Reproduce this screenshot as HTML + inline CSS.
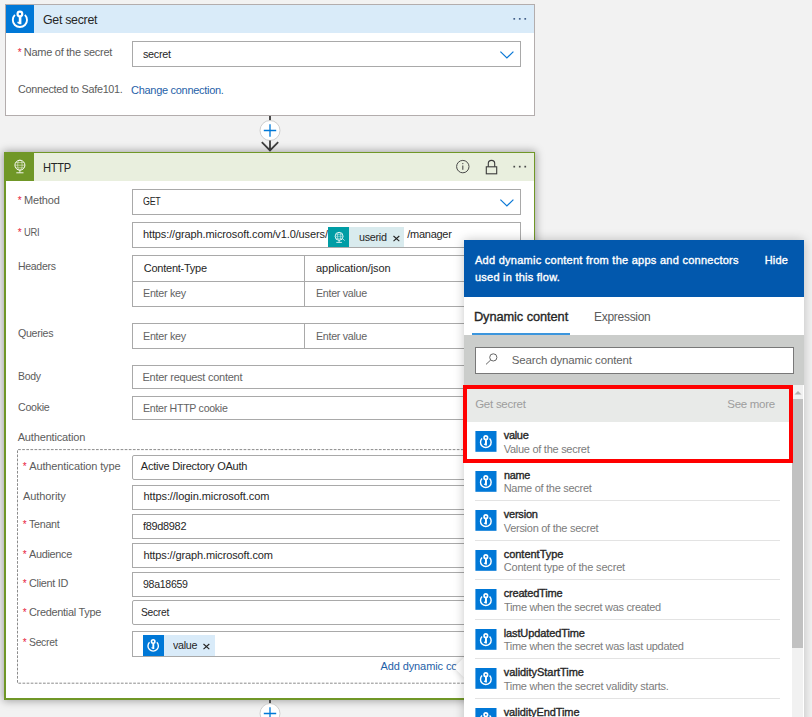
<!DOCTYPE html>
<html lang="en">
<head>
<meta charset="utf-8">
<title>HTTP action with Key Vault secret</title>
<style>
html,body{margin:0;padding:0}
body{width:812px;height:717px;overflow:hidden;position:relative;background:#f2f2f2;font-family:"Liberation Sans",sans-serif;font-size:11px;color:#5c5c5c}
.a{position:absolute}
.t{position:absolute;white-space:nowrap;line-height:16px;height:16px;transform-origin:0 50%}
.in{position:absolute;box-sizing:border-box;border:1px solid #a9a9a9;background:#fff}
.rq{position:absolute;color:#e8213c;font-size:10px;line-height:12px}
.ph{color:#636363}
.sb{-webkit-text-stroke:0.35px currentColor}
.dk{color:#262626}
.lk{color:#1f5fa8}
.sep{left:475.4px;width:305px;height:1px;background:#e3e3e3}
svg{position:absolute;overflow:visible}
</style>
</head>
<body>
<svg width="0" height="0" style="left:0;top:0"><defs>
<g id="kv"><g fill="none" stroke="#fff"><path d="M8.9 9.9A7.1 7.1 0 1 0 18.9 9.9" stroke-width="1.9"/><circle cx="13.9" cy="8.9" r="2.35" stroke-width="2.2"/></g><path d="M12.8 11.3h2.6v7.9h-1.8l-2.4-1.3.6-1.3 1 .4z" fill="#fff"/></g>
<g id="chev"><path d="M0.4 0.6L6.9 7L13.4 0.6" fill="none" stroke="#0a78d6" stroke-width="1.2"/></g>
</defs></svg>

<!-- ================= Get secret card ================= -->
<div class="a" id="card1" style="left:5px;top:4px;width:530px;height:112px;box-sizing:border-box;border:1px solid #b3adad;background:#fff"></div>
<div class="a" style="left:34px;top:5px;width:500px;height:28px;background:#d9ebf9"></div>
<div class="a" style="left:6px;top:5px;width:28px;height:28px;background:#0078d7"></div>
<svg style="left:6px;top:5px" width="28" height="28" viewBox="0 0 28 28"><use href="#kv"/></svg>
<div class="t dk" id="t_title1" style="left:43.0px;top:11.9px;font-size:12.5px;letter-spacing:-0.30px;transform:scaleX(0.990)">Get secret</div>
<svg style="left:513px;top:17.8px" width="14" height="2" viewBox="0 0 14 2"><g fill="#44608a"><rect x="0.4" y="0" width="1.7" height="1.7"/><rect x="5.9" y="0" width="1.7" height="1.7"/><rect x="11.4" y="0" width="1.7" height="1.7"/></g></svg>

<div class="rq" style="left:17.7px;top:46.8px">*</div>
<div class="t" id="t_name" style="left:23.7px;top:44.4px;letter-spacing:-0.25px">Name of the secret</div>
<div class="in" style="left:132px;top:41px;width:389px;height:26px"></div>
<div class="t dk" id="t_secret" style="left:142.9px;top:45.9px;letter-spacing:-0.30px;transform:scaleX(0.980)">secret</div>
<svg style="left:500px;top:51px" width="14" height="8" viewBox="0 0 14 8"><use href="#chev"/></svg>
<div class="t" id="t_conn" style="left:17.7px;top:80.9px;letter-spacing:-0.30px;transform:scaleX(0.984)">Connected to Safe101.</div>
<div class="t lk" id="t_chg" style="left:131.1px;top:81.9px;letter-spacing:-0.30px">Change connection.</div>

<!-- connector 1 -->
<div class="a" style="left:269px;top:116px;width:2px;height:5px;background:#4a4a4a"></div>
<svg style="left:259px;top:120px" width="22" height="32" viewBox="0 0 22 32"><circle cx="11" cy="10.5" r="10" fill="#fff" stroke="#cfcfcf" stroke-width="1"/><path d="M11 4.3V16.7M4.8 10.5H17.2" stroke="#0078d7" stroke-width="1.3" fill="none"/><path d="M11 20.5V30M2.8 22.2L11 30.4L19.2 22.2" stroke="#3f3f3f" stroke-width="1.8" fill="none"/></svg>

<!-- ================= HTTP card ================= -->
<div class="a" id="card2" style="left:4px;top:152px;width:531px;height:548px;box-sizing:border-box;background:#fff;border:solid #709727;border-width:1px 1px 2px 2px;box-shadow:0 0 8px 1px rgba(0,0,0,.34)"></div>
<div class="a" style="left:34px;top:153px;width:500px;height:28px;background:#e9efde"></div>
<div class="a" style="left:6px;top:153px;width:28px;height:28px;background:#709727"></div>
<svg style="left:6px;top:153px" width="28" height="28" viewBox="0 0 28 28"><g fill="none" stroke="#fff"><circle cx="13.9" cy="12.2" r="5" stroke-width="0.95"/><g stroke-width="0.6" opacity=".85"><ellipse cx="13.9" cy="12.2" rx="2.2" ry="5"/><path d="M9 12.2H18.8M9.9 9.6H17.9M9.9 14.8H17.9"/></g><path d="M13.9 17.2V19.5M10.3 19.8H17.5" stroke-width="0.9"/></g></svg>
<div class="t dk" id="t_title2" style="left:43.0px;top:159.9px;font-size:12.5px;letter-spacing:-0.30px;transform:scaleX(0.891)">HTTP</div>
<svg style="left:455px;top:158px" width="74" height="18" viewBox="0 0 74 18"><circle cx="7.8" cy="8.6" r="6.2" fill="none" stroke="#4a4a4a" stroke-width="1"/><path d="M7.8 7.4V11.8" stroke="#4a4a4a" stroke-width="1.1"/><circle cx="7.8" cy="5.6" r=".7" fill="#4a4a4a"/><rect x="31.3" y="8.8" width="10.4" height="7" fill="none" stroke="#3b3b3b" stroke-width="1.1"/><path d="M33.3 8.8V5.6a3.2 3.2 0 0 1 6.4 0V8.8" fill="none" stroke="#3b3b3b" stroke-width="1.1"/><g fill="#4a4a4a"><rect x="58.4" y="7.8" width="1.7" height="1.7"/><rect x="63.9" y="7.8" width="1.7" height="1.7"/><rect x="69.4" y="7.8" width="1.7" height="1.7"/></g></svg>

<!-- rows -->
<div class="rq" style="left:17.7px;top:194.8px">*</div>
<div class="t" id="l_method" style="left:23.9px;top:192.2px;letter-spacing:-0.12px">Method</div>
<div class="in" style="left:132px;top:189px;width:389px;height:26px"></div>
<div class="t dk" id="v_get" style="left:143.4px;top:192.9px;letter-spacing:-0.30px;transform:scaleX(0.805)">GET</div>
<svg style="left:500px;top:199px" width="14" height="8" viewBox="0 0 14 8"><use href="#chev"/></svg>

<div class="rq" style="left:17.7px;top:226.8px">*</div>
<div class="t" id="l_uri" style="left:23.9px;top:224.2px;letter-spacing:-0.30px;transform:scaleX(0.853)">URI</div>
<div class="in" style="left:132px;top:222px;width:389px;height:26px"></div>
<div class="t dk" id="v_uri" style="left:143.0px;top:226.0px;letter-spacing:-0.12px">https://graph.microsoft.com/v1.0/users/</div>
<div class="a" style="left:328px;top:227px;width:76px;height:20px;background:#d9ebee"></div>
<div class="a" style="left:328px;top:227px;width:21px;height:20px;background:#009da5"></div>
<svg style="left:328px;top:227px" width="21" height="20" viewBox="0 0 21 20"><g fill="none" stroke="#fff"><circle cx="11.1" cy="9.3" r="4" stroke-width="0.85"/><g stroke-width="0.55" opacity=".85"><ellipse cx="11.1" cy="9.3" rx="1.7" ry="4"/><path d="M7.1 9.3H15.1M7.9 7.3H14.3M7.9 11.3H14.3"/></g><path d="M11.1 13.3V15.2M8.3 15.4H13.9M15.2 12.2l1.3 1.3" stroke-width="0.8"/></g></svg>
<div class="t dk" id="v_userid" style="left:358.8px;top:228.8px;letter-spacing:-0.30px;transform:scaleX(0.980)">userid</div>
<svg style="left:392.5px;top:235.4px" width="7" height="7" viewBox="0 0 7 7"><path d="M0.5 1L6.3 6.2M6.3 1L0.5 6.2" stroke="#222" stroke-width="1.1" fill="none"/></svg>
<div class="t dk" id="v_manager" style="left:407.3px;top:226.0px;letter-spacing:-0.27px">/manager</div>

<div class="t" id="l_headers" style="left:17.7px;top:257.7px;letter-spacing:-0.30px;transform:scaleX(0.952)">Headers</div>
<div class="in" style="left:132px;top:255px;width:389px;height:52px"></div>
<div class="a" style="left:133px;top:281px;width:387px;height:1px;background:#a9a9a9"></div>
<div class="a" style="left:304px;top:256px;width:1px;height:50px;background:#a9a9a9"></div>
<div class="t dk" id="v_ct" style="left:143.8px;top:259.9px;letter-spacing:-0.25px">Content-Type</div>
<div class="t dk" id="v_aj" style="left:316.1px;top:259.8px;letter-spacing:-0.09px">application/json</div>
<div class="t ph" id="v_ek1" style="left:143.4px;top:284.7px;letter-spacing:-0.30px;transform:scaleX(0.978)">Enter key</div>
<div class="t ph" id="v_ev1" style="left:315.7px;top:284.7px;letter-spacing:-0.30px;transform:scaleX(0.972)">Enter value</div>

<div class="t" id="l_queries" style="left:17.7px;top:324.7px;letter-spacing:-0.30px;transform:scaleX(0.966)">Queries</div>
<div class="in" style="left:132px;top:323px;width:389px;height:26px"></div>
<div class="a" style="left:304px;top:324px;width:1px;height:24px;background:#a9a9a9"></div>
<div class="t ph" id="v_ek2" style="left:143.4px;top:328.2px;letter-spacing:-0.30px;transform:scaleX(0.978)">Enter key</div>
<div class="t ph" id="v_ev2" style="left:315.7px;top:328.0px;letter-spacing:-0.30px;transform:scaleX(0.972)">Enter value</div>

<div class="t" id="l_body" style="left:17.7px;top:367.9px;letter-spacing:-0.30px;transform:scaleX(0.951)">Body</div>
<div class="in" style="left:132px;top:365px;width:389px;height:24px"></div>
<div class="t ph" id="v_body" style="left:142.5px;top:368.7px;letter-spacing:-0.26px">Enter request content</div>

<div class="t" id="l_cookie" style="left:17.7px;top:399.1px;letter-spacing:-0.30px;transform:scaleX(0.971)">Cookie</div>
<div class="in" style="left:132px;top:396px;width:389px;height:24px"></div>
<div class="t ph" id="v_cookie" style="left:142.5px;top:399.7px;letter-spacing:-0.30px;transform:scaleX(0.965)">Enter HTTP cookie</div>

<div class="t" id="l_auth" style="left:17.7px;top:428.9px;letter-spacing:-0.16px">Authentication</div>
<svg style="left:0;top:0" width="530" height="700" viewBox="0 0 530 700"><path d="M521 449.6H17.5V683.2H521" fill="none" stroke="#8c8c8c" stroke-width="1" stroke-dasharray="2.7 1.4"/></svg>

<div class="rq" style="left:22.8px;top:460.8px">*</div>
<div class="t" id="l_authtype" style="left:29.2px;top:458.0px;letter-spacing:-0.12px">Authentication type</div>
<div class="in" style="left:132px;top:455px;width:389px;height:25px;border-radius:2px"></div>
<div class="t dk" id="v_adoauth" style="left:140.8px;top:457.8px;letter-spacing:-0.22px">Active Directory OAuth</div>

<div class="t" id="l_authority" style="left:23.1px;top:488.0px;letter-spacing:-0.10px">Authority</div>
<div class="in" style="left:132px;top:485px;width:389px;height:25px"></div>
<div class="t dk" id="v_login" style="left:143.4px;top:487.9px;letter-spacing:-0.07px">https://login.microsoft.com</div>

<div class="rq" style="left:22.8px;top:518.8px">*</div>
<div class="t" id="l_tenant" style="left:28.9px;top:515.8px;letter-spacing:-0.30px;transform:scaleX(0.973)">Tenant</div>
<div class="in" style="left:132px;top:514px;width:389px;height:25px"></div>
<div class="t dk" id="v_tenant" style="left:143.4px;top:517.9px;letter-spacing:-0.30px;transform:scaleX(0.993)">f89d8982</div>

<div class="rq" style="left:22.8px;top:548.8px">*</div>
<div class="t" id="l_aud" style="left:28.9px;top:545.9px;letter-spacing:-0.30px;transform:scaleX(0.989)">Audience</div>
<div class="in" style="left:132px;top:543px;width:389px;height:25px"></div>
<div class="t dk" id="v_aud" style="left:143.4px;top:546.6px;letter-spacing:-0.12px">https://graph.microsoft.com</div>

<div class="rq" style="left:22.8px;top:577.8px">*</div>
<div class="t" id="l_client" style="left:28.9px;top:574.7px;letter-spacing:-0.30px;transform:scaleX(0.988)">Client ID</div>
<div class="in" style="left:132px;top:572px;width:389px;height:25px"></div>
<div class="t dk" id="v_client" style="left:143.4px;top:575.8px;letter-spacing:-0.30px;transform:scaleX(0.960)">98a18659</div>

<div class="rq" style="left:22.8px;top:606.8px">*</div>
<div class="t" id="l_cred" style="left:28.9px;top:603.7px;letter-spacing:-0.30px;transform:scaleX(0.995)">Credential Type</div>
<div class="in" style="left:132px;top:600px;width:389px;height:25px;border-radius:2px"></div>
<div class="t dk" id="v_cred" style="left:140.8px;top:604.0px;letter-spacing:-0.30px;transform:scaleX(0.933)">Secret</div>

<div class="rq" style="left:22.8px;top:636.8px">*</div>
<div class="t" id="l_secret" style="left:28.9px;top:634.1px;letter-spacing:-0.30px;transform:scaleX(0.943)">Secret</div>
<div class="in" style="left:132px;top:631px;width:389px;height:26px"></div>
<div class="a" style="left:143px;top:635px;width:72px;height:20.5px;background:#d9ebf9"></div>
<div class="a" style="left:143px;top:635px;width:20.5px;height:20.5px;background:#0078d7"></div>
<svg style="left:143px;top:635px" width="20.5" height="20.5" viewBox="0 0 28 28"><use href="#kv"/></svg>
<div class="t dk" id="v_value" style="left:172.8px;top:636.9px;letter-spacing:-0.30px;transform:scaleX(0.976)">value</div>
<svg style="left:203px;top:642.8px" width="7" height="7" viewBox="0 0 7 7"><path d="M0.5 1L6.3 6.2M6.3 1L0.5 6.2" stroke="#222" stroke-width="1.1" fill="none"/></svg>
<div class="t lk" id="l_adddyn" style="left:380.4px;top:658.0px;letter-spacing:-0.09px">Add dynamic content</div>

<!-- connector 2 -->
<div class="a" style="left:269px;top:700px;width:2px;height:4px;background:#4a4a4a"></div>
<svg style="left:259px;top:703px" width="22" height="22" viewBox="0 0 22 22"><circle cx="11" cy="10.5" r="10" fill="#fff" stroke="#cfcfcf" stroke-width="1"/><path d="M11 4.3V16.7M4.8 10.5H17.2" stroke="#0078d7" stroke-width="1.3" fill="none"/></svg>

<!-- ================= Dynamic content popup ================= -->
<div class="a" style="left:457px;top:660px;width:15px;height:15px;background:#fff;transform:rotate(45deg);box-shadow:0 0 6px rgba(0,0,0,.16)"></div>
<div class="a" id="popup" style="left:464px;top:240px;width:340px;height:500px;background:#fff;box-shadow:0 0 10px 0 rgba(0,0,0,.22)"></div>
<div class="a" style="left:464px;top:240px;width:340px;height:56.5px;background:#0258ad"></div>
<div class="t sb" id="p_h1" style="left:475.0px;top:252.3px;letter-spacing:0.26px;color:#fff">Add dynamic content from the apps and connectors</div>
<div class="t sb" id="p_h2" style="left:475.0px;top:268.6px;letter-spacing:0.24px;color:#fff">used in this flow.</div>
<div class="t sb" id="p_hide" style="left:764.7px;top:252.3px;letter-spacing:0.19px;color:#fff">Hide</div>
<div class="t dk sb" id="p_tab1" style="left:473.9px;top:309.4px;font-size:12.8px;letter-spacing:-0.07px">Dynamic content</div>
<div class="t" id="p_tab2" style="left:594.2px;top:309.4px;font-size:12.8px;letter-spacing:-0.30px;transform:scaleX(0.937)">Expression</div>
<div class="a" style="left:471.5px;top:333px;width:98.5px;height:2.5px;background:#3c96dd"></div>
<div class="a" style="left:464px;top:335px;width:340px;height:50px;background:#cbcdcb"></div>
<div class="in" style="left:475px;top:347px;width:319px;height:26.5px;border-color:#787878"></div>
<svg style="left:485px;top:353px" width="14" height="12" viewBox="0 0 14 12"><circle cx="8.3" cy="4.4" r="3.6" fill="none" stroke="#666" stroke-width="1"/><path d="M5.7 7L1 11.4" stroke="#666" stroke-width="1" fill="none"/></svg>
<div class="t ph" id="p_search" style="left:511.7px;top:351.9px;font-size:11.5px;letter-spacing:-0.15px">Search dynamic content</div>

<div class="a" style="left:464px;top:385px;width:329px;height:36.5px;background:#e8eae8"></div>
<div class="t" id="p_grp" style="left:475.2px;top:395.5px;font-size:11.5px;letter-spacing:-0.26px;color:#9d9d9d">Get secret</div>
<div class="t" id="p_more" style="left:727.3px;top:395.5px;font-size:11.5px;letter-spacing:-0.30px;color:#9d9d9d">See more</div>

<!-- scrollbar -->
<div class="a" style="left:792px;top:385px;width:11.4px;height:332px;background:#f1f1f1"></div>
<div class="a" style="left:792px;top:399px;width:11px;height:249px;background:#c1c1c1"></div>
<svg style="left:794px;top:390px" width="8" height="5" viewBox="0 0 8 5"><path d="M0.5 4.5L4 1L7.5 4.5z" fill="#b0b0b0"/></svg>

<!-- items -->
<svg style="left:475px;top:431.0px" width="22" height="21" viewBox="0 0 22 21"><rect x="0.4" y="0" width="21.1" height="20.8" fill="#0078d7"/><use href="#kv" transform="translate(0.4 0) scale(0.75)"/></svg>
<div class="t dk sb" id="i0_a" style="left:503.7px;top:427.0px;letter-spacing:-0.30px">value</div>
<div class="t" id="i0_b" style="left:503.7px;top:440.7px;letter-spacing:-0.27px;color:#7c7c7c">Value of the secret</div>
<div class="a sep" style="top:460.7px"></div>
<svg style="left:475px;top:470.5px" width="22" height="21" viewBox="0 0 22 21"><rect x="0.4" y="0" width="21.1" height="20.8" fill="#0078d7"/><use href="#kv" transform="translate(0.4 0) scale(0.75)"/></svg>
<div class="t dk sb" id="i1_a" style="left:503.7px;top:466.5px;letter-spacing:-0.30px;transform:scaleX(0.984)">name</div>
<div class="t" id="i1_b" style="left:503.7px;top:480.2px;letter-spacing:-0.28px;color:#7c7c7c">Name of the secret</div>
<div class="a sep" style="top:500.2px"></div>
<svg style="left:475px;top:510.0px" width="22" height="21" viewBox="0 0 22 21"><rect x="0.4" y="0" width="21.1" height="20.8" fill="#0078d7"/><use href="#kv" transform="translate(0.4 0) scale(0.75)"/></svg>
<div class="t dk sb" id="i2_a" style="left:503.7px;top:506.0px;letter-spacing:-0.20px">version</div>
<div class="t" id="i2_b" style="left:503.7px;top:519.7px;letter-spacing:-0.27px;color:#7c7c7c">Version of the secret</div>
<div class="a sep" style="top:539.7px"></div>
<svg style="left:475px;top:549.5px" width="22" height="21" viewBox="0 0 22 21"><rect x="0.4" y="0" width="21.1" height="20.8" fill="#0078d7"/><use href="#kv" transform="translate(0.4 0) scale(0.75)"/></svg>
<div class="t dk sb" id="i3_a" style="left:503.7px;top:545.5px;letter-spacing:-0.02px">contentType</div>
<div class="t" id="i3_b" style="left:503.7px;top:559.2px;letter-spacing:-0.18px;color:#7c7c7c">Content type of the secret</div>
<div class="a sep" style="top:579.2px"></div>
<svg style="left:475px;top:589.0px" width="22" height="21" viewBox="0 0 22 21"><rect x="0.4" y="0" width="21.1" height="20.8" fill="#0078d7"/><use href="#kv" transform="translate(0.4 0) scale(0.75)"/></svg>
<div class="t dk sb" id="i4_a" style="left:503.7px;top:585.0px;letter-spacing:-0.18px">createdTime</div>
<div class="t" id="i4_b" style="left:503.7px;top:598.7px;letter-spacing:-0.30px;transform:scaleX(0.996);color:#7c7c7c">Time when the secret was created</div>
<div class="a sep" style="top:618.7px"></div>
<svg style="left:475px;top:628.5px" width="22" height="21" viewBox="0 0 22 21"><rect x="0.4" y="0" width="21.1" height="20.8" fill="#0078d7"/><use href="#kv" transform="translate(0.4 0) scale(0.75)"/></svg>
<div class="t dk sb" id="i5_a" style="left:503.7px;top:624.5px;letter-spacing:-0.11px">lastUpdatedTime</div>
<div class="t" id="i5_b" style="left:503.7px;top:638.2px;letter-spacing:-0.28px;color:#7c7c7c">Time when the secret was last updated</div>
<div class="a sep" style="top:658.2px"></div>
<svg style="left:475px;top:668.0px" width="22" height="21" viewBox="0 0 22 21"><rect x="0.4" y="0" width="21.1" height="20.8" fill="#0078d7"/><use href="#kv" transform="translate(0.4 0) scale(0.75)"/></svg>
<div class="t dk sb" id="i6_a" style="left:503.7px;top:664.0px;letter-spacing:-0.04px">validityStartTime</div>
<div class="t" id="i6_b" style="left:503.7px;top:677.7px;letter-spacing:-0.26px;color:#7c7c7c">Time when the secret validity starts.</div>
<div class="a sep" style="top:697.7px"></div>
<svg style="left:475px;top:707.5px" width="22" height="21" viewBox="0 0 22 21"><rect x="0.4" y="0" width="21.1" height="20.8" fill="#0078d7"/><use href="#kv" transform="translate(0.4 0) scale(0.75)"/></svg>
<div class="t dk sb" id="i7_a" style="left:503.7px;top:703.5px;letter-spacing:-0.10px">validityEndTime</div>
<div class="t" id="i7_b" style="left:503.7px;top:717.2px;letter-spacing:-0.30px;transform:scaleX(0.994);color:#7c7c7c">Time when the secret validity ends.</div>
<div class="a sep" style="top:737.2px"></div>

<!-- red highlight -->
<div class="a" style="left:463px;top:385px;width:330px;height:78px;box-sizing:border-box;border:4px solid #ff0000"></div>

</body>
</html>
